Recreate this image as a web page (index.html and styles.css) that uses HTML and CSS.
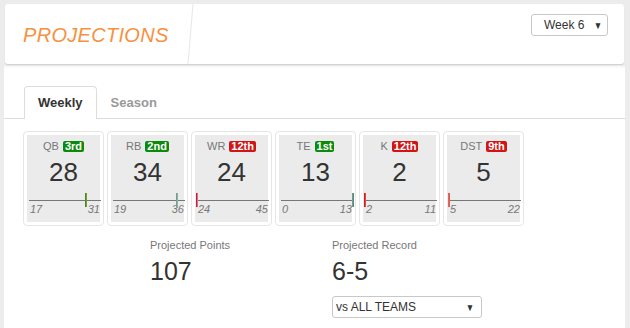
FILE: index.html
```html
<!DOCTYPE html>
<html>
<head>
<meta charset="utf-8">
<link rel="stylesheet" href="styles.css">
</head>
<body>
<header class="header">
  <div class="title-box"><h1 class="title">PROJECTIONS</h1></div>
  <div class="spacer"></div>
  <div class="select select-week"><span>Week 6</span><span class="caret">&#9660;</span></div>
</header>
<main class="panel">
  <nav class="tabs">
    <div class="tab active">Weekly</div>
    <div class="tab">Season</div>
  </nav>
  <section class="content">
    <div class="cards">
      <div class="card"><div class="card-in">
        <div class="pos">QB<span class="badge good">3rd</span></div>
        <div class="pts">28</div>
        <div class="scale"><div class="track"><span class="mark m-qb" style="left:78.6%"></span></div><div class="ends"><span>17</span><span>31</span></div></div>
      </div></div>
      <div class="card"><div class="card-in">
        <div class="pos">RB<span class="badge good">2nd</span></div>
        <div class="pts">34</div>
        <div class="scale"><div class="track"><span class="mark m-rb" style="left:88.2%"></span></div><div class="ends"><span>19</span><span>36</span></div></div>
      </div></div>
      <div class="card"><div class="card-in">
        <div class="pos">WR<span class="badge bad">12th</span></div>
        <div class="pts">24</div>
        <div class="scale"><div class="track"><span class="mark m-wr" style="left:0%"></span></div><div class="ends"><span>24</span><span>45</span></div></div>
      </div></div>
      <div class="card"><div class="card-in">
        <div class="pos">TE<span class="badge good">1st</span></div>
        <div class="pts">13</div>
        <div class="scale"><div class="track"><span class="mark m-te" style="left:100%"></span></div><div class="ends"><span>0</span><span>13</span></div></div>
      </div></div>
      <div class="card"><div class="card-in">
        <div class="pos">K<span class="badge bad">12th</span></div>
        <div class="pts">2</div>
        <div class="scale"><div class="track"><span class="mark m-k" style="left:0%"></span></div><div class="ends"><span>2</span><span>11</span></div></div>
      </div></div>
      <div class="card"><div class="card-in">
        <div class="pos">DST<span class="badge bad">9th</span></div>
        <div class="pts">5</div>
        <div class="scale"><div class="track"><span class="mark m-dst" style="left:0%"></span></div><div class="ends"><span>5</span><span>22</span></div></div>
      </div></div>
    </div>
    <div class="stats">
      <div class="stat">
        <div class="stat-label">Projected Points</div>
        <div class="stat-value">107</div>
      </div>
      <div class="stat">
        <div class="stat-label">Projected Record</div>
        <div class="stat-value">6-5</div>
        <div class="select select-teams"><span>vs ALL TEAMS</span><span class="caret">&#9660;</span></div>
      </div>
    </div>
  </section>
</main>
</body>
</html>
```
FILE: styles.css
```css
* { box-sizing: border-box; }
html, body { margin: 0; padding: 0; }
body {
  background: #ececec;
  font-family: "Liberation Sans", Arial, sans-serif;
  color: #333;
  width: 630px;
  height: 328px;
  overflow: hidden;
}
.header {
  margin: 4px 6px 0 5px;
  height: 60px;
  background: #fff;
  border-radius: 3px;
  box-shadow: 0 1px 1px rgba(0,0,0,0.12);
  display: flex;
  align-items: flex-start;
}
.title-box {
  position: relative;
  width: 185px;
  height: 60px;
  padding: 19px 0 0 18px;
}
.title-box::after {
  content: "";
  position: absolute;
  top: 0;
  bottom: 0;
  right: -1px;
  width: 1px;
  background: #e6e6e6;
  transform: skewX(-4.8deg);
}
.title {
  margin: 0;
  font-size: 20px;
  line-height: 24px;
  font-weight: normal;
  font-style: italic;
  letter-spacing: 0.3px;
  color: #f7913f;
}
.spacer { flex: 1; }
.select {
  display: flex;
  align-items: center;
  justify-content: space-between;
  border: 1px solid #c8c8c8;
  border-radius: 3px;
  background: #fff;
  font-size: 12px;
  color: #333;
}
.caret { font-size: 10px; color: #333; transform: scaleX(0.85); }
.select-week {
  margin: 10px 16px 0 0;
  width: 77px;
  height: 22px;
  padding: 0 4px 0 12px;
}
.panel {
  margin: 2px 5px 0 4px;
  background: #fff;
  height: 262px;
  box-shadow: inset 0 3px 3px -2px rgba(0,0,0,0.05);
}
.tabs {
  display: flex;
  padding: 20px 0 0 20px;
  border-bottom: 1px solid #ddd;
  height: 53px;
}
.tab {
  font-size: 13px;
  font-weight: bold;
  line-height: 31px;
  height: 33px;
  padding: 0 13px;
  color: #999;
  border: 1px solid transparent;
  border-bottom: none;
}
.tab.active {
  color: #333;
  background: #fff;
  border-color: #ddd;
  border-radius: 4px 4px 0 0;
}
.content { padding: 12px 0 0 19px; }
.cards { display: flex; gap: 3px; }
.card {
  width: 81px;
  height: 95px;
  border: 1px solid #e6e6e6;
  border-radius: 4px;
  padding: 3px;
  background: #fff;
}
.card-in {
  background: #ebebeb;
  height: 100%;
  padding-top: 6px;
  text-align: center;
}
.pos {
  font-size: 11px;
  line-height: 11px;
  color: #777;
  display: flex;
  justify-content: center;
  align-items: center;
}
.badge {
  margin-left: 4px;
  padding: 0 2px;
  height: 11px;
  line-height: 11px;
  border-radius: 2px;
  color: #fff;
  font-weight: bold;
  font-size: 11px;
}
.good { background: #0b8a0b; }
.bad { background: #d21414; }
.pts {
  margin-top: 5px;
  font-size: 26px;
  line-height: 30px;
  color: #333;
}
.scale { padding: 0 0 0 2px; margin-right: -1px; }
.track {
  position: relative;
  height: 14px;
  border-bottom: 1px solid #777;
}
.mark {
  position: absolute;
  top: 6px;
  height: 14px;
  width: 2px;
  margin-left: -1px;
  border-left: 1px solid;
  border-right: 1px solid;
}
.m-qb { border-left-color: #3c8c2a; border-right-color: #7c9a30; }
.m-rb { border-left-color: #4aa6d6; border-right-color: #b8aa58; }
.m-wr { border-left-color: #cc1c34; border-right-color: #e06a88; }
.m-te { border-left-color: #8c9c3e; border-right-color: #3a8ccc; }
.m-k { border-left-color: #d41e1e; border-right-color: #e04848; }
.m-dst { border-left-color: #e0702c; border-right-color: #e0507a; }
.ends {
  display: flex;
  justify-content: space-between;
  margin-top: 2px;
  padding: 0 1px 0 1px;
  font-size: 11px;
  line-height: 13px;
  font-style: italic;
  color: #777;
}
.stats { display: flex; padding-left: 127px; }
.stat { width: 182px; padding-top: 12px; }
.stat-label { font-size: 11px; line-height: 15px; color: #777; }
.stat-value { margin-top: 3px; font-size: 25px; line-height: 30px; color: #333; }
.select-teams {
  margin-top: 10px;
  width: 150px;
  height: 22px;
  padding: 0 6px 0 3px;
}
```
